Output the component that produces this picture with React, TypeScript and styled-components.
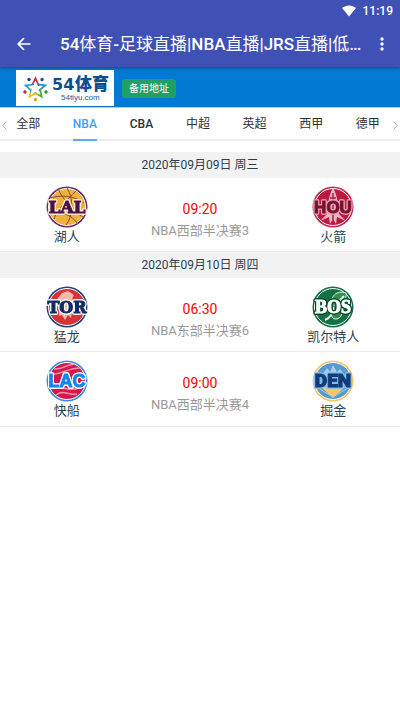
import React from "react";
import styled, { createGlobalStyle } from "styled-components";

const GlobalStyle = createGlobalStyle`
  * { box-sizing: border-box; }
  body {
    margin: 0;
    background: #fff;
    color: #2c3e50;
    font-family: Roboto, "Noto Sans CJK SC", sans-serif;
  }
  button { border: 0; padding: 0; background: none; font: inherit; color: inherit; cursor: pointer; }
  svg { display: block; }
`;

const Header = styled.header`
  position: relative;
  z-index: 1;
  background: #3f51b5;
  color: #fff;
  box-shadow: 0 1px 3px rgba(0, 0, 0, 0.35);
`;

const StatusBar = styled.div`
  display: flex;
  justify-content: flex-end;
  align-items: center;
  gap: 7px;
  height: 21px;
  padding-right: 7px;
  font-size: 12px;
  font-weight: 500;
`;

const AppBar = styled.div`
  display: flex;
  align-items: center;
  height: 46px;
  padding: 0 10px 0 16px;
`;

const IconButton = styled.button`
  display: flex;
  flex: none;
  align-items: center;
  justify-content: center;
  width: 16px;
  height: 24px;
`;

const Title = styled.h1`
  flex: 1;
  min-width: 0;
  margin: 0 12px 0 28px;
  overflow: hidden;
  white-space: nowrap;
  text-overflow: ellipsis;
  font-size: 17px;
  line-height: 24px;
  font-weight: 500;
`;

const TitleHan = styled.span`
  font-weight: 400;
`;

const Banner = styled.div`
  display: flex;
  align-items: center;
  gap: 8px;
  height: 41px;
  padding: 2px 16px 0;
  background: #0279d3;
  border-bottom: 1px solid #a9d2f2;
`;

const Brand = styled.a`
  display: flex;
  background: #fff;
`;

const BackupButton = styled.button`
  height: 19px;
  padding: 0 7px;
  border-radius: 3px;
  background: #1fa067;
  color: #fff;
  font-size: 10px;
  line-height: 19px;
`;

const Tabs = styled.nav`
  position: relative;
  display: flex;
  height: 33px;
  padding-right: 4px;
  border-bottom: 2px solid #ebedf2;
`;

const Tab = styled.button<{ $active?: boolean; $bold?: boolean }>`
  flex: 1;
  display: flex;
  justify-content: center;
  height: 33px;
  color: ${(p) => (p.$active ? "#409eff" : "#303133")};
  font-size: 12px;
  line-height: 33px;
  font-weight: ${(p) => (p.$bold ? 500 : 400)};

  span {
    height: 33px;
    border-bottom: 2px solid ${(p) => (p.$active ? "#58abff" : "transparent")};
  }
`;

const TabArrow = styled.button<{ $side: "left" | "right" }>`
  position: absolute;
  top: 13px;
  ${(p) => p.$side}: 2px;
  color: #a0a4ac;
`;

const Schedule = styled.main`
  padding-top: 11px;
`;

const DateBar = styled.h2`
  margin: 0;
  background: #f2f2f2;
  text-align: center;
  font-size: 12px;
  line-height: 26px;
  font-weight: 400;
`;

const Match = styled.article`
  display: grid;
  grid-template-columns: repeat(3, 1fr);
  height: 74px;
  padding-top: 8px;
  border-bottom: 1px solid #ebebeb;

  & + & {
    height: 75px;
  }
`;

const Team = styled.div`
  display: flex;
  flex-direction: column;
  align-items: center;
  font-size: 13px;
  line-height: 18px;
`;

const Info = styled.div`
  padding-top: 13px;
  text-align: center;
  white-space: nowrap;
`;

const Time = styled.time`
  display: block;
  color: #f00;
  font-size: 14px;
  line-height: 20px;
`;

const Stage = styled.div`
  margin-top: 1px;
  color: #999;
  font-size: 13px;
  line-height: 22px;
`;

type Code = "LAL" | "HOU" | "TOR" | "BOS" | "LAC" | "DEN";

interface Badge {
  rim: string;
  fill: string;
  ink: string;
  edge: string;
  font: string;
  size: number;
  art: React.ReactNode;
}

const badges: Record<Code, Badge> = {
  LAL: {
    rim: "#6b2a68", fill: "#efb13b", ink: "#4d1048", edge: "#fff0d0", font: "DejaVu Serif", size: 17,
    art: (
      <g fill="none" stroke="#8c4b38" strokeWidth="1">
        <path d="M12 3C17 13 27 25 37 31M30 5C20 14 9 28 8 33M4 12C14 9 27 9 38 17M3 29C14 25 25 28 31 37M21 2C28 12 27 31 20 39" />
      </g>
    ),
  },
  HOU: {
    rim: "#c6274b", fill: "#bd1940", ink: "#78112f", edge: "#e79bb0", font: "Liberation Sans", size: 17,
    art: (
      <g>
        <path d="M21 2C16 9 16 22 15 28L8 35L17 31L18 38L21 33L24 38L25 31L34 35L27 28C26 22 26 9 21 2Z" fill="#e5b7c1" />
        <path d="M21 7V34M18 12H24" stroke="#a42746" strokeWidth="1.5" />
      </g>
    ),
  },
  TOR: {
    rim: "#24437e", fill: "#d73235", ink: "#112d68", edge: "#fff", font: "DejaVu Serif", size: 16,
    art: (
      <path d="M11 13L16 7L22 5L28 9L26 13L30 15L27 18L30 27L26 26L25 32L22 29L19 34L16 29L13 30L13 26L15 22L10 20L17 15Z" fill="#f6b8a6" />
    ),
  },
  BOS: {
    rim: "#156d45", fill: "#137245", ink: "#fff", edge: "#064d2c", font: "Liberation Serif", size: 18,
    art: (
      <g fill="none" stroke="#e7f4e6">
        <path d="M21 20C17 10 25 4 34 7C35 14 30 19 24 21C32 24 31 31 25 33C19 34 18 27 20 22C16 29 9 26 7 21" fill="#398b55" />
        <path d="M21 21C22 27 18 32 13 34M23 20L32 10" strokeWidth="2" />
      </g>
    ),
  },
  LAC: {
    rim: "#358fe6", fill: "#d91549", ink: "#1686ed", edge: "#fff", font: "Liberation Sans", size: 18,
    art: (
      <g fill="none" stroke="#f294a8" strokeWidth="1.5">
        <path d="M4 14C13 16 24 7 35 8M8 9C16 10 21 4 29 4M6 28C16 25 22 33 36 27M10 35C17 29 24 36 31 34" />
      </g>
    ),
  },
  DEN: {
    rim: "#f4c760", fill: "#5799d1", ink: "#123c79", edge: "#84bce7", font: "Roboto", size: 19,
    art: (
      <g>
        <path d="M8 18L15 8L18 12L21 5L25 12L28 9L35 18Z" fill="#a8cce9" />
        <path d="M9 27H33L21 38Z" fill="#f4c965" />
        <path d="M6 28L21 37L36 28" fill="none" stroke="#a8cce9" />
      </g>
    ),
  },
};

const BadgeCode = styled.text<{ $ink: string; $edge: string }>`
  fill: ${(p) => p.$ink};
  stroke: ${(p) => p.$ink};
  stroke-width: 1px;
  font-weight: 900;
  text-anchor: middle;
  filter: drop-shadow(1px 0 0 ${(p) => p.$edge}) drop-shadow(-1px 0 0 ${(p) => p.$edge})
    drop-shadow(0 1px 0 ${(p) => p.$edge}) drop-shadow(0 -1px 0 ${(p) => p.$edge});
`;

function TeamBadge({ code }: { code: Code }) {
  const b = badges[code];
  return (
    <svg width="42" height="42" viewBox="0 0 42 42" role="img" aria-label={code}>
      <circle cx="21" cy="21" r="20.5" fill={b.rim} />
      <circle cx="21" cy="21" r="18.5" fill={b.fill} stroke="#fff" strokeWidth="1" />
      {b.art}
      <BadgeCode x="21" y="27" fontFamily={b.font} fontSize={b.size} $ink={b.ink} $edge={b.edge}>
        {code}
      </BadgeCode>
    </svg>
  );
}

function BrandLogo() {
  const points = [
    { a: 0, c: "#d92530", d: "#293e92" },
    { a: 72, c: "#168ccc", d: "#174f98" },
    { a: 144, c: "#53af3c", d: "#33983c" },
    { a: 216, c: "#f6bf18", d: "#eb9b17" },
    { a: 288, c: "#199ed3", d: "#c52c42" },
  ];
  return (
    <svg width="98" height="36" viewBox="0 0 98 36" role="img" aria-label="54体育">
      {points.map((r) => (
        <g key={r.a} transform={`rotate(${r.a} 19.5 18.5)`}>
          <path d="M19.500 6L23 14.500L27 15L22 16L19.500 10.500L16.500 15L13.500 15.500L16 13.500Z" fill={r.c} />
          <circle cx="13" cy="9.500" r="1.700" fill={r.d} />
        </g>
      ))}
      <g fill="#0b4f91" fontWeight="900">
        <text x="36" y="20" fontSize="16" fontFamily="DejaVu Sans">54</text>
        <text x="59" y="20" fontSize="17" fontFamily="Noto Sans CJK SC">体育</text>
      </g>
      <text x="45" y="30" fontFamily="Liberation Sans" fontSize="8" fill="#175a94">54tiyu.com</text>
    </svg>
  );
}

const tabs = ["全部", "NBA", "CBA", "中超", "英超", "西甲", "德甲"];

interface Game {
  home: [Code, string];
  away: [Code, string];
  time: string;
  stage: string;
}

const days: { date: string; games: Game[] }[] = [
  {
    date: "2020年09月09日 周三",
    games: [{ home: ["LAL", "湖人"], away: ["HOU", "火箭"], time: "09:20", stage: "NBA西部半决赛3" }],
  },
  {
    date: "2020年09月10日 周四",
    games: [
      { home: ["TOR", "猛龙"], away: ["BOS", "凯尔特人"], time: "06:30", stage: "NBA东部半决赛6" },
      { home: ["LAC", "快船"], away: ["DEN", "掘金"], time: "09:00", stage: "NBA西部半决赛4" },
    ],
  },
];

function Chevron({ d }: { d: string }) {
  return (
    <svg width="5" height="9" viewBox="0 0 5 9" fill="none" stroke="currentColor">
      <path d={d} />
    </svg>
  );
}

export default function App() {
  return (
    <>
      <GlobalStyle />
      <Header>
        <StatusBar>
          <svg width="14" height="12" viewBox="0 0 14 12" fill="#fff" aria-hidden="true">
            <path d="M0 3C4-.5 10-.5 14 3L7 11.500Z" />
          </svg>
          <span>11:19</span>
        </StatusBar>
        <AppBar>
          <IconButton aria-label="返回">
            <svg width="16" height="16" viewBox="0 0 16 16" fill="none" stroke="#fff" strokeWidth="1.700">
              <path d="M14.500 8H2.500M8 2.200L2.200 8L8 13.800" />
            </svg>
          </IconButton>
          <Title>
            54<TitleHan>体育</TitleHan>-<TitleHan>足球直播</TitleHan>|NBA<TitleHan>直播</TitleHan>|JRS
            <TitleHan>直播</TitleHan>|<TitleHan>低</TitleHan>...
          </Title>
          <IconButton aria-label="更多">
            <svg width="4" height="14" viewBox="0 0 4 14" fill="#fff">
              <circle cx="2" cy="2" r="1.700" />
              <circle cx="2" cy="7" r="1.700" />
              <circle cx="2" cy="12" r="1.700" />
            </svg>
          </IconButton>
        </AppBar>
      </Header>
      <Banner>
        <Brand href="#"><BrandLogo /></Brand>
        <BackupButton>备用地址</BackupButton>
      </Banner>
      <Tabs>
        {tabs.map((t) => (
          <Tab key={t} $active={t === "NBA"} $bold={t === "NBA" || t === "CBA"}>
            <span>{t}</span>
          </Tab>
        ))}
        <TabArrow $side="left" aria-label="向左"><Chevron d="M4.500 .5L.7 4.500L4.500 8.500" /></TabArrow>
        <TabArrow $side="right" aria-label="向右"><Chevron d="M.5 .5L4.300 4.500L.5 8.500" /></TabArrow>
      </Tabs>
      <Schedule>
        {days.map((day) => (
          <section key={day.date}>
            <DateBar>{day.date}</DateBar>
            {day.games.map((g) => (
              <Match key={g.home[0]}>
                <Team><TeamBadge code={g.home[0]} />{g.home[1]}</Team>
                <Info>
                  <Time>{g.time}</Time>
                  <Stage>{g.stage}</Stage>
                </Info>
                <Team><TeamBadge code={g.away[0]} />{g.away[1]}</Team>
              </Match>
            ))}
          </section>
        ))}
      </Schedule>
    </>
  );
}
